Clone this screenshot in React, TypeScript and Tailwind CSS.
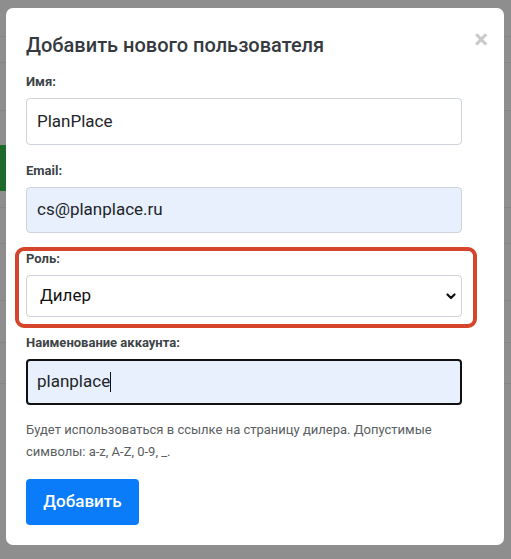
import React from 'react';

const rowLines = [36, 62, 110, 207, 243, 300, 342, 383];

const Field: React.FC<{ label: string; children: React.ReactNode; className?: string }> = ({ label, children, className }) => (
  <div className={className}>
    <label className="block text-[13px] leading-[20px] font-bold text-[#3d4348] mb-[6px]">{label}</label>
    {children}
  </div>
);

const App: React.FC = () => {
  return (
    <div className="relative w-[511px] h-[559px] overflow-hidden bg-[#8e8e8e] font-['Roboto',sans-serif]">
      {/* page behind the overlay */}
      {rowLines.map((y) => (
        <div key={y} className="absolute left-0 right-0 h-px bg-[#858585]" style={{ top: y }} />
      ))}
      <div className="absolute left-0 top-[145px] w-[8px] h-[46px] bg-[#1d6b2c]" />

      {/* modal */}
      <div className="absolute left-[6px] top-[8px] w-[498px] h-[537px] rounded-[7px] bg-white pt-[25px] px-[20px]">
        <span className="absolute right-[16px] top-[16px] text-[26px] leading-[30px] font-bold text-[#cacaca]">×</span>

        <h2 className="text-[20px] leading-[24px] font-medium text-[#343a40] mb-[15px]">Добавить нового пользователя</h2>

        <div className="w-[436px] flex flex-col gap-[16px]">
          <Field label="Имя:">
            <div className="h-[47px] rounded-[4px] border border-[#ced4da] bg-white flex items-center pl-[10px] text-[17px] text-[#212529]">
              PlanPlace
            </div>
          </Field>

          <Field label="Email:">
            <div className="h-[46px] rounded-[4px] border border-[#ced4da] bg-[#e8f0fe] flex items-center pl-[10px] text-[17px] text-[#212529]">
              cs@planplace.ru
            </div>
          </Field>

          <Field label="Роль:">
            <div className="h-[42px] rounded-[4px] border border-[#ced4da] bg-white flex items-center justify-between pl-[13px] pr-[4px] text-[17px] text-[#111]">
              <span>Дилер</span>
              <svg width="12" height="12" viewBox="0 0 12 12" fill="none">
                <path d="M2.5 4.5 L6 8 L9.5 4.5" stroke="#111" strokeWidth="2.2" strokeLinecap="round" strokeLinejoin="round" />
              </svg>
            </div>
          </Field>

          <Field label="Наименование аккаунта:">
            <div className="h-[46px] rounded-[4px] border-2 border-[#111] bg-[#e8f0fe] flex items-center pl-[9px] text-[17px] text-[#212529]">
              planplace
              <span className="inline-block w-px h-[20px] bg-[#111]" />
            </div>
          </Field>
        </div>

        <p className="mt-[14px] text-[13px] leading-[22px] text-[#5a5e62]">
          Будет использоваться в ссылке на страницу дилера. Допустимые
          <br />
          символы: a-z, A-Z, 0-9, _.
        </p>

        <button className="mt-[16px] w-[113px] h-[46px] rounded-[4px] bg-[#0a7cfa] text-white text-[17px] font-medium">
          Добавить
        </button>
      </div>

      {/* annotation frame */}
      <div className="absolute left-[15px] top-[247px] w-[462px] h-[81px] rounded-[9px] border-[4px] border-[#d5452c]" />
    </div>
  );
};

export default App;
